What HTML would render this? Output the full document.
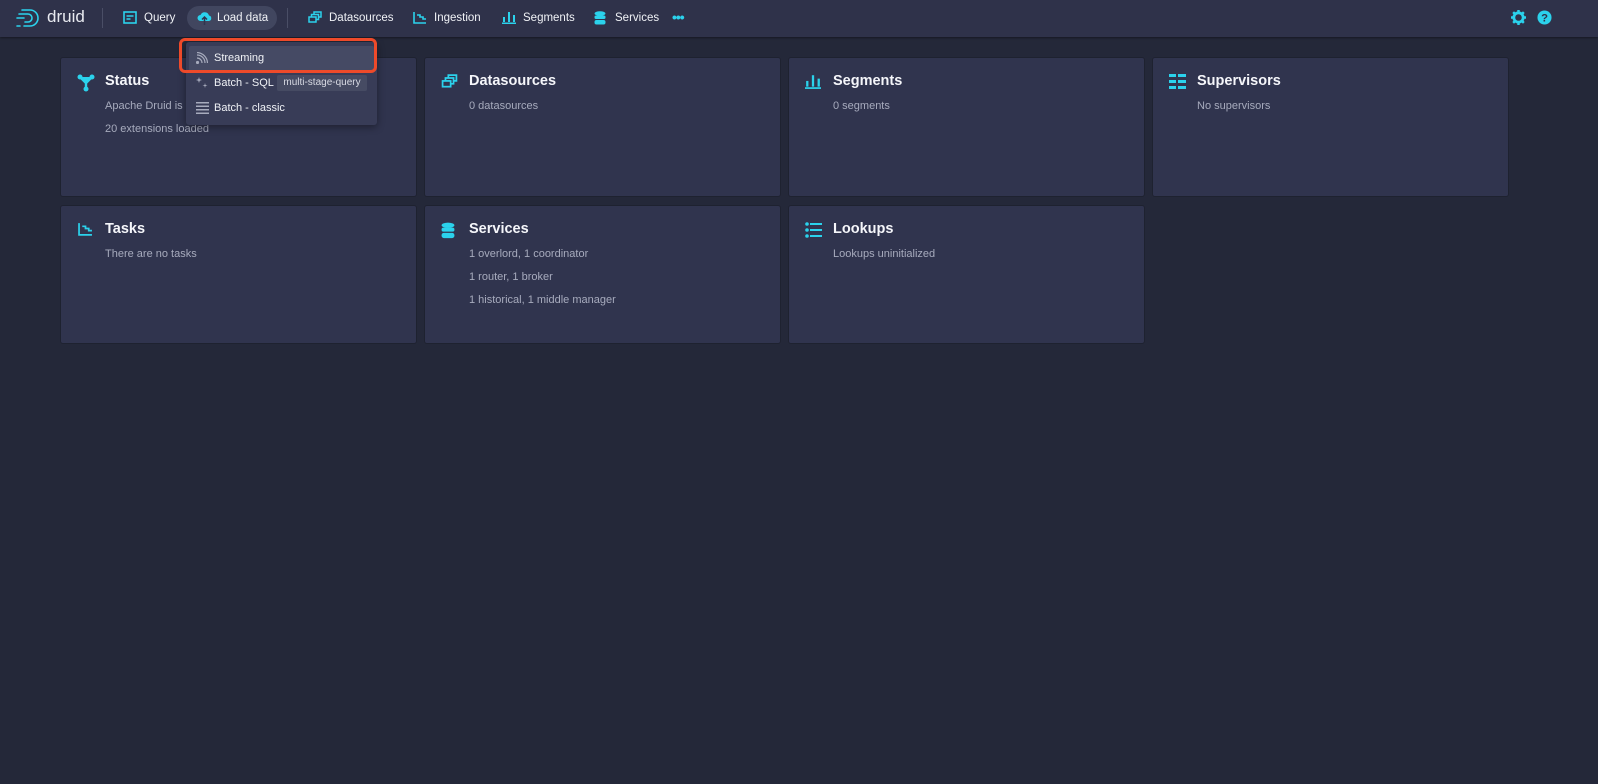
<!DOCTYPE html><html><head><style>
body{margin:0;width:1598px;height:784px;background:#242839;font-family:"Liberation Sans",sans-serif;overflow:hidden;position:relative}
.nav{position:absolute;left:0;top:0;width:1598px;height:37px;background:#2f324a;box-shadow:0 1px 2px rgba(0,0,0,.4)}
.ni{position:absolute;top:0;height:37px;line-height:36px;font-size:11.5px;color:#f0f2f6}
.ni svg{position:absolute;top:11px;left:0}
.card{position:absolute;width:355px;background:#30344e;border-radius:2px;box-shadow:0 0 0 1px rgba(0,0,0,.15)}
.card h3{position:absolute;left:44px;top:15px;margin:0;font-size:14.5px;font-weight:bold;color:#f5f6fa}
.card p{position:absolute;left:44px;margin:0;font-size:11px;color:#a7abbd}
.card svg{position:absolute;left:16px;top:16px}
.menu{position:absolute;left:186px;top:42px;width:191px;height:83px;background:#383c57;border-radius:3px;box-shadow:0 2px 8px rgba(0,0,0,.4)}
.mi{position:absolute;left:28px;font-size:11px;color:#f0f2f6}
</style></head><body>
<div class="nav">
 <svg style="position:absolute;left:16px;top:8px" width="26" height="20" viewBox="0 0 26 20" fill="none" stroke="#2bd2ec" stroke-width="1.6" stroke-linecap="round"><path d="M6 2h8a8 8 0 0 1 0 16h-6M3 6h9a4 4 0 0 1 0 8H9M1 18h3M1 10h7"/></svg>
 <div class="ni" style="left:47px;font-size:17px;color:#e8eaf0;line-height:33px">druid</div>
 <div style="position:absolute;left:102px;top:8px;width:1px;height:20px;background:#4a4e66"></div>
 <div class="ni" style="left:123px;padding-left:21px"><svg width="14" height="13" viewBox="0 0 14 13"><rect x="1" y="1" width="12" height="11" fill="none" stroke="#2bd2ec" stroke-width="1.6"/><path d="M3.5 5h7M3.5 8h4" stroke="#2bd2ec" stroke-width="1.4"/></svg>Query</div>
 <div style="position:absolute;left:187px;top:6px;width:90px;height:24px;border-radius:12px;background:#41465f"></div>
 <div class="ni" style="left:197px;padding-left:20px"><svg width="15" height="14" viewBox="0 0 15 14"><path d="M3.5 10a3 3 0 0 1 0-6A4.5 4.5 0 0 1 12 4.5a2.8 2.8 0 0 1 0 5.5z" fill="#2bd2ec"/><path d="M7.5 6v8M5 8.5l2.5-2.5 2.5 2.5" stroke="#30344e" stroke-width="1.5" fill="none"/></svg>Load data</div>
 <div style="position:absolute;left:287px;top:8px;width:1px;height:20px;background:#4a4e66"></div>
 <div class="ni" style="left:308px;padding-left:21px"><svg width="14" height="13" viewBox="0 0 14 13" fill="none" stroke="#2bd2ec" stroke-width="1.5"><rect x="1" y="6" width="7" height="5"/><path d="M3.5 6V3.5h7V8.5H8M6 3.5V1h7v5h-2.5"/></svg>Datasources</div>
 <div class="ni" style="left:413px;padding-left:21px"><svg width="14" height="13" viewBox="0 0 14 13" fill="none" stroke="#2bd2ec" stroke-width="1.6"><path d="M1 1v11h12M4 4h3v2h3v2h3"/></svg>Ingestion</div>
 <div class="ni" style="left:502px;padding-left:21px"><svg width="14" height="13" viewBox="0 0 14 13" fill="#2bd2ec"><rect x="1" y="6" width="2" height="5"/><rect x="6" y="1" width="2" height="10"/><rect x="11" y="4" width="2" height="7"/><rect x="0" y="11.5" width="14" height="1.5"/></svg>Segments</div>
 <div class="ni" style="left:594px;padding-left:21px"><svg width="12" height="14" viewBox="0 0 12 14" fill="#2bd2ec"><ellipse cx="6" cy="2.5" rx="5.5" ry="2.3"/><rect x=".5" y="4.5" width="11" height="3.5" rx="1.5"/><rect x=".5" y="9" width="11" height="4.5" rx="2"/></svg>Services</div>
 <div class="ni" style="left:672px;color:#2bd2ec;font-size:14px;font-weight:bold;line-height:35px;letter-spacing:-1px">•••</div>
 <svg style="position:absolute;left:1511px;top:10px" width="15" height="15" viewBox="0 0 16 16"><circle cx="8" cy="8" r="5" fill="none" stroke="#2bd2ec" stroke-width="3"/><g stroke="#2bd2ec" stroke-width="2.6"><path d="M8 0v3M8 13v3M0 8h3M13 8h3M2.3 2.3l2.1 2.1M11.6 11.6l2.1 2.1M2.3 13.7l2.1-2.1M11.6 4.4l2.1-2.1"/></g></svg>
 <svg style="position:absolute;left:1537px;top:10px" width="15" height="15" viewBox="0 0 16 16"><circle cx="8" cy="8" r="7.5" fill="#2bd2ec"/><text x="8" y="12.5" text-anchor="middle" font-size="12" font-weight="bold" fill="#2f324a" font-family="Liberation Sans">?</text></svg>
</div>

<div class="card" style="left:61px;top:58px;height:138px"><svg width="18" height="18" viewBox="0 0 18 18" fill="#2bd2ec"><circle cx="3" cy="3" r="2.5"/><circle cx="15" cy="3" r="2.5"/><circle cx="9" cy="15" r="2.5"/><path d="M3 3L9 9L15 3M9 9v6" stroke="#2bd2ec" stroke-width="2.4"/></svg><h3>Status</h3><p style="top:42px">Apache Druid is</p><p style="top:65px">20 extensions loaded</p></div>
<div class="card" style="left:425px;top:58px;height:138px"><svg width="17" height="15" viewBox="0 0 14 13" fill="none" stroke="#2bd2ec" stroke-width="1.5"><rect x="1" y="6" width="7" height="5"/><path d="M3.5 6V3.5h7V8.5H8M6 3.5V1h7v5h-2.5"/></svg><h3>Datasources</h3><p style="top:42px">0 datasources</p></div>
<div class="card" style="left:789px;top:58px;height:138px"><svg width="16" height="15" viewBox="0 0 14 13" fill="#2bd2ec"><rect x="1" y="6" width="2" height="5"/><rect x="6" y="1" width="2" height="10"/><rect x="11" y="4" width="2" height="7"/><rect x="0" y="11.5" width="14" height="1.5"/></svg><h3>Segments</h3><p style="top:42px">0 segments</p></div>
<div class="card" style="left:1153px;top:58px;height:138px"><svg width="17" height="15" viewBox="0 0 17 15" fill="#2bd2ec"><rect x="0" y="0" width="7" height="3"/><rect x="0" y="6" width="7" height="3"/><rect x="0" y="12" width="7" height="3"/><rect x="9" y="0" width="8" height="3"/><rect x="9" y="6" width="8" height="3"/><rect x="9" y="12" width="8" height="3"/></svg><h3>Supervisors</h3><p style="top:42px">No supervisors</p></div>
<div class="card" style="left:61px;top:206px;height:137px"><svg width="17" height="14" viewBox="0 0 14 13" fill="none" stroke="#2bd2ec" stroke-width="1.6"><path d="M1 1v11h12M4 4h3v2h3v2h3"/></svg><h3>Tasks</h3><p style="top:42px">There are no tasks</p></div>
<div class="card" style="left:425px;top:206px;height:137px"><svg width="14" height="17" viewBox="0 0 12 14" fill="#2bd2ec"><ellipse cx="6" cy="2.5" rx="5.5" ry="2.3"/><rect x=".5" y="4.5" width="11" height="3.5" rx="1.5"/><rect x=".5" y="9" width="11" height="4.5" rx="2"/></svg><h3>Services</h3><p style="top:42px">1 overlord, 1 coordinator</p><p style="top:65px">1 router, 1 broker</p><p style="top:88px">1 historical, 1 middle manager</p></div>
<div class="card" style="left:789px;top:206px;height:137px"><svg width="17" height="16" viewBox="0 0 17 16" fill="#2bd2ec"><circle cx="2" cy="2" r="1.8"/><circle cx="2" cy="8" r="1.8"/><circle cx="2" cy="14" r="1.8"/><rect x="5" y="1" width="12" height="2"/><rect x="5" y="7" width="12" height="2"/><rect x="5" y="13" width="12" height="2"/></svg><h3>Lookups</h3><p style="top:42px">Lookups uninitialized</p></div>

<div class="menu">
 <div style="position:absolute;left:3px;top:4px;width:185px;height:25px;background:#454a64;border-radius:2px"></div>
 <svg style="position:absolute;left:10px;top:10px" width="12" height="12" viewBox="0 0 12 12" fill="none" stroke="#a7abbd" stroke-width="1.2"><circle cx="1.5" cy="10.5" r="1" fill="#a7abbd"/><path d="M1 6a5 5 0 0 1 5 5M1 3a8 8 0 0 1 8 8M1 0.5a11 11 0 0 1 10.5 10.5"/></svg>
 <div class="mi" style="top:10px">Streaming</div>
 <svg style="position:absolute;left:10px;top:35px" width="12" height="12" viewBox="0 0 12 12" fill="#a7abbd"><path d="M3 0l.7 2.3L6 3l-2.3.7L3 6l-.7-2.3L0 3l2.3-.7zM9 6l.5 2 2 .5-2 .5L9 11l-.5-2-2-.5 2-.5z"/></svg>
 <div class="mi" style="top:35px">Batch - SQL</div>
 <div style="position:absolute;left:91px;top:33px;width:90px;height:16px;background:#464b63;border-radius:2px;font-size:10px;color:#d8dae3;line-height:16px;text-align:center">multi-stage-query</div>
 <svg style="position:absolute;left:10px;top:60px" width="13" height="12" viewBox="0 0 13 12" fill="#a7abbd"><rect y="0" width="13" height="1.5"/><rect y="3.5" width="13" height="1.5"/><rect y="7" width="13" height="1.5"/><rect y="10.5" width="13" height="1.5"/></svg>
 <div class="mi" style="top:60px">Batch - classic</div>
</div>
<div style="position:absolute;left:179px;top:38px;width:198px;height:35px;border:3px solid #ee4a2a;border-radius:6px;box-sizing:border-box"></div>
</body></html>
